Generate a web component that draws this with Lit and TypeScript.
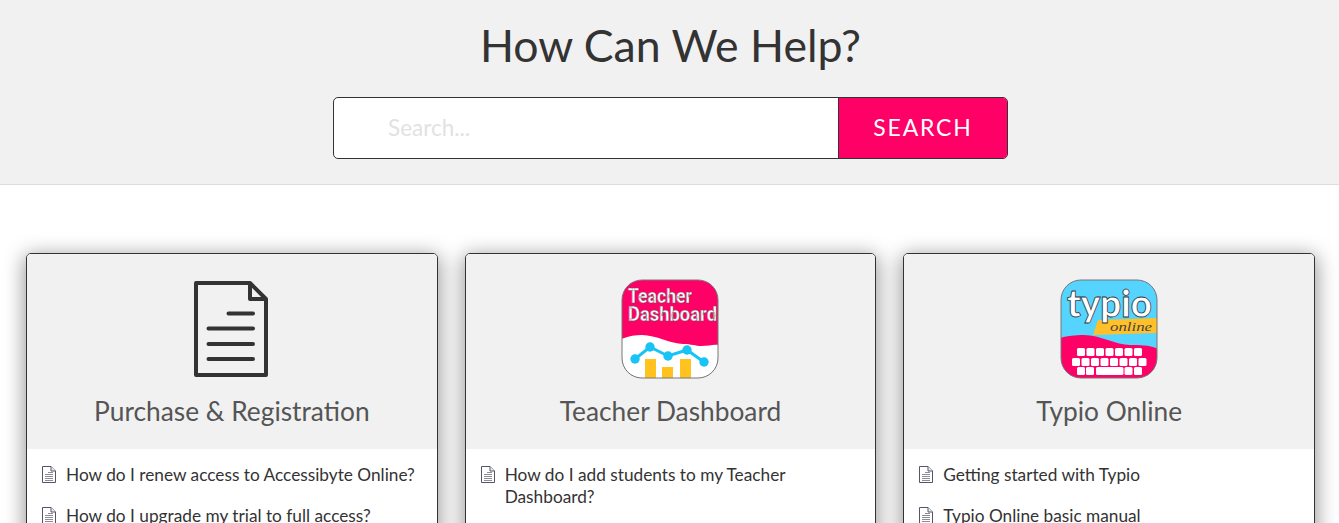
import { LitElement, html, css, svg } from "lit";
import { customElement } from "lit/decorators.js";

const docSmall = html`<svg class="doc" viewBox="0 0 14 17" width="14" height="17" aria-hidden="true">
  <path d="M.5 .5H9L13.500 5V16.500H.5Z" fill="#fff" stroke="#55556a" stroke-width="1"/>
  <path d="M9 .5V5H13.500" fill="#eee" stroke="#55556a" stroke-width="1"/>
  <path d="M6 6.500H11 M3 8.500H11 M3 10.500H11 M3 12.500H11 M3 14.500H11" stroke="#8c8c94" stroke-width="1"/>
</svg>`;

const docBig = html`<svg class="big" viewBox="0 0 74 96" width="74" height="96" aria-hidden="true">
  <path d="M2 2H56L72 18V94H2Z" fill="none" stroke="#333" stroke-width="4" stroke-linejoin="round"/>
  <path d="M56 2V18H72" fill="none" stroke="#333" stroke-width="4" stroke-linejoin="round"/>
  <path d="M34.500 32.500H59 M14.500 47.500H59 M14.500 63H59 M14.500 78H59" stroke="#333" stroke-width="4" stroke-linecap="round"/>
</svg>`;

const teacher = html`<svg class="logo" viewBox="0 0 98 100" width="98" height="100" aria-hidden="true">
  <defs><clipPath id="tc"><rect x="1" y="1" width="96" height="98" rx="20"/></clipPath></defs>
  <g clip-path="url(#tc)">
    <rect width="98" height="100" fill="#ff0066"/>
    <path d="M0 60C8 57 14 56 21 56C35 56 50 65 62 65C70 65 75 67 80 67C88 67 92 65 98 66V100H0Z" fill="#fff"/>
    <rect x="24" y="80" width="11" height="20" fill="#ffc21f"/>
    <rect x="41" y="88" width="11" height="12" fill="#ffc21f"/>
    <rect x="59" y="80" width="11" height="20" fill="#ffc21f"/>
    <path d="M14 80L29 68L47 77L66 71L83 83" fill="none" stroke="#18c3f5" stroke-width="3"/>
    <circle cx="14" cy="80" r="4.700" fill="#18c3f5"/><circle cx="29" cy="68" r="4.700" fill="#18c3f5"/><circle cx="47" cy="77" r="4.700" fill="#18c3f5"/><circle cx="66" cy="71" r="4.700" fill="#18c3f5"/><circle cx="83" cy="83" r="4.700" fill="#18c3f5"/>
    <text x="7" y="24" class="lt" textLength="64" lengthAdjust="spacingAndGlyphs">Teacher</text>
    <text x="7" y="41.500" class="lt" textLength="89" lengthAdjust="spacingAndGlyphs">Dashboard</text>
  </g>
  <rect x="1" y="1" width="96" height="98" rx="20" fill="none" stroke="#777" stroke-width="1"/>
</svg>`;

const keys = (y: number, xs: number[], w = 8) =>
  xs.map((x) => svg`<rect x=${x} y=${y} width=${w} height="8" rx="1.500" fill="#fff"/>`);

const typio = html`<svg class="logo" viewBox="0 0 98 100" width="98" height="100" aria-hidden="true">
  <defs><clipPath id="ty"><rect x="1" y="1" width="96" height="98" rx="20"/></clipPath></defs>
  <g clip-path="url(#ty)">
    <rect width="98" height="100" fill="#55d4ff"/>
    <path d="M38 41L97 39V54L33 56Z" fill="#ffc02a"/>
    <path d="M0 59C8 57 14 56 24 56C40 56 56 66 70 66C80 66 90 66 98 70V100H0Z" fill="#ff0066"/>
    ${keys(69, [17, 26.500, 36, 45.500, 55, 64.500, 74])}
    ${keys(79, [12, 21.500, 31, 40.500, 50, 59.500, 69, 78.500])}
    ${keys(88, [17, 26])}
    <rect x="36" y="88" width="27.500" height="8" rx="1.500" fill="#fff"/>
    ${keys(88, [64.500, 74])}
    <text x="7" y="38" class="ty" textLength="85" lengthAdjust="spacingAndGlyphs">typio</text>
    <text x="50" y="52" class="on" textLength="42" lengthAdjust="spacingAndGlyphs">online</text>
  </g>
  <rect x="1" y="1" width="96" height="98" rx="20" fill="none" stroke="#777" stroke-width="1"/>
</svg>`;

@customElement("app-root")
export class AppRoot extends LitElement {
  static styles = css`
    :host { display: block; width: 1339px; height: 523px; overflow: hidden; background: #fff; font-family: Lato, sans-serif; color: #333; }
    .hero { height: 184px; background: #f1f1f1; border-bottom: 1px solid #ddd; display: flex; flex-direction: column; align-items: center; }
    h1 { margin: 18px 0 0 2px; font-size: 44.600px; line-height: 54px; font-weight: 400; color: #333; }
    .search { margin: 25px 0 0 2px; display: flex; width: 675px; height: 62px; box-sizing: border-box; border: 1px solid #333; border-radius: 5px; overflow: hidden; background: #fff; }
    .field { flex: 1; padding-left: 54px; padding-bottom: 2px; display: flex; align-items: center; font-size: 22.500px; color: #e2e2e2; }
    .btn { width: 169px; background: #ff0066; border-left: 1px solid #333; box-sizing: border-box; color: #fff; display: flex; align-items: center; justify-content: center; padding-bottom: 2px; font-size: 23px; letter-spacing: 1.800px; }
    .grid { display: grid; grid-template-columns: repeat(3, 1fr); gap: 27px; padding: 68px 24px 0 26px; }
    .card { border: 1px solid #333; border-radius: 5px; box-shadow: 0 4px 20px 2px rgba(0,0,0,.4); background: #fff; height: 400px; overflow: hidden; }
    .head { height: 195px; box-sizing: border-box; background: #f1f1f1; display: flex; flex-direction: column; align-items: center; padding-top: 25px; }
    .art { height: 100px; display: flex; align-items: center; justify-content: center; }
    .big { margin-right: 2px; }
    h2 { margin: 16px 0 0; font-size: 26.300px; line-height: 32px; font-weight: 400; color: #555; }
    ul { list-style: none; margin: 0; padding: 15px 15px 0 15px; }
    li { display: flex; gap: 10px; font-size: 17.250px; line-height: 22px; margin-bottom: 19px; color: #333; }
    .doc { flex: none; margin-top: 2px; }
    .lt { font: 700 20px Roboto, sans-serif; fill: #fff; stroke: #555; stroke-width: .4px; }
    .ty { font: 900 37px Lato, sans-serif; fill: #fff; stroke: #333; stroke-width: .8px; }
    .on { font: italic 400 13px "Liberation Serif", serif; fill: #444; }
  `;

  private card(art: unknown, title: string, items: string[]) {
    return html`<section class="card">
      <div class="head"><div class="art">${art}</div><h2>${title}</h2></div>
      <ul>${items.map((t) => html`<li>${docSmall}<span>${t}</span></li>`)}</ul>
    </section>`;
  }

  render() {
    return html`
      <header class="hero">
        <h1>How Can We Help?</h1>
        <div class="search"><div class="field">Search...</div><div class="btn">SEARCH</div></div>
      </header>
      <main class="grid">
        ${this.card(docBig, "Purchase & Registration", ["How do I renew access to Accessibyte Online?", "How do I upgrade my trial to full access?"])}
        ${this.card(teacher, "Teacher Dashboard", ["How do I add students to my Teacher Dashboard?"])}
        ${this.card(typio, "Typio Online", ["Getting started with Typio", "Typio Online basic manual"])}
      </main>
    `;
  }
}
